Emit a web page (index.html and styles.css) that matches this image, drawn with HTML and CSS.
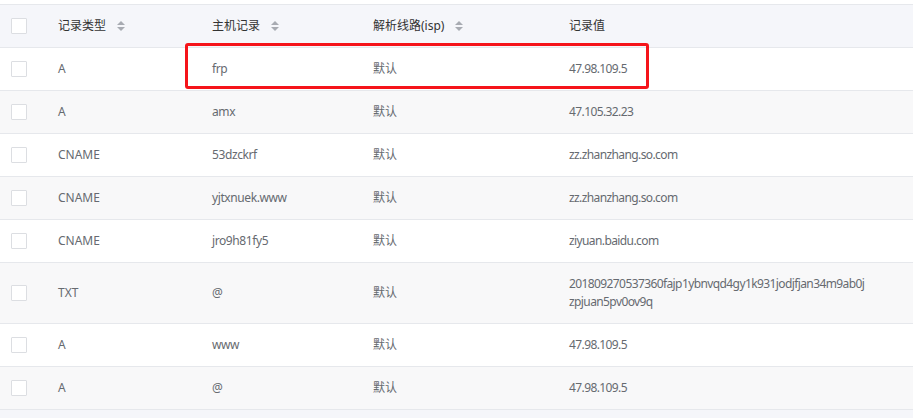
FILE: index.html
```html
<!DOCTYPE html>
<html lang="zh-CN">
<head>
<meta charset="utf-8">
<title>解析记录</title>
<link rel="stylesheet" href="styles.css">
</head>
<body>
<div class="page">
  <div class="table">
    <div class="row head">
      <div class="cell check"><span class="box"></span></div>
      <div class="cell">记录类型<span class="sort"><i class="up"></i><i class="down"></i></span></div>
      <div class="cell">主机记录<span class="sort"><i class="up"></i><i class="down"></i></span></div>
      <div class="cell">解析线路(isp)<span class="sort"><i class="up"></i><i class="down"></i></span></div>
      <div class="cell">记录值</div>
    </div>
    <div class="row">
      <div class="cell check"><span class="box"></span></div>
      <div class="cell">A</div><div class="cell host">frp</div><div class="cell">默认</div><div class="cell value">47.98.109.5</div>
    </div>
    <div class="row alt">
      <div class="cell check"><span class="box"></span></div>
      <div class="cell">A</div><div class="cell host">amx</div><div class="cell">默认</div><div class="cell value">47.105.32.23</div>
    </div>
    <div class="row">
      <div class="cell check"><span class="box"></span></div>
      <div class="cell">CNAME</div><div class="cell host">53dzckrf</div><div class="cell">默认</div><div class="cell value">zz.zhanzhang.so.com</div>
    </div>
    <div class="row alt">
      <div class="cell check"><span class="box"></span></div>
      <div class="cell">CNAME</div><div class="cell host">yjtxnuek.www</div><div class="cell">默认</div><div class="cell value">zz.zhanzhang.so.com</div>
    </div>
    <div class="row">
      <div class="cell check"><span class="box"></span></div>
      <div class="cell">CNAME</div><div class="cell host">jro9h81fy5</div><div class="cell">默认</div><div class="cell value">ziyuan.baidu.com</div>
    </div>
    <div class="row alt tall">
      <div class="cell check"><span class="box"></span></div>
      <div class="cell">TXT</div><div class="cell host">@</div><div class="cell">默认</div><div class="cell value long">201809270537360fajp1ybnvqd4gy1k931jodjfjan34m9ab0j<br>zpjuan5pv0ov9q</div>
    </div>
    <div class="row">
      <div class="cell check"><span class="box"></span></div>
      <div class="cell">A</div><div class="cell host">www</div><div class="cell">默认</div><div class="cell value">47.98.109.5</div>
    </div>
    <div class="row alt">
      <div class="cell check"><span class="box"></span></div>
      <div class="cell">A</div><div class="cell host">@</div><div class="cell">默认</div><div class="cell value">47.98.109.5</div>
    </div>
  </div>
  <div class="highlight"></div>
</div>
</body>
</html>
```

FILE: styles.css
```css
html, body {
  margin: 0;
  padding: 0;
  background: #f5f6fa;
}
body {
  font-family: "Noto Sans", "Noto Sans CJK SC", sans-serif;
  font-size: 12px;
  color: #666a70;
}
.page {
  position: relative;
  padding-top: 4px;
  background: #fff;
}
.table {
  border-top: 1px solid #e6e8ec;
}
.row {
  display: grid;
  grid-template-columns: 58px 154px 161px 196px 1fr;
  height: 42px;
  border-bottom: 1px solid #e6e8ec;
  background: #fff;
}
.row.alt {
  background: #f8f8f9;
}
.row.tall {
  height: 60px;
}
.row.head {
  background: #f5f6fa;
  color: #333;
}
.cell {
  display: flex;
  align-items: center;
  line-height: 18px;
}
.host {
  letter-spacing: -0.4px;
}
.value {
  letter-spacing: -0.6px;
}
.value.long {
  display: block;
  align-self: center;
}
.check {
  padding-left: 11px;
}
.box {
  width: 14px;
  height: 14px;
  border: 1px solid #dcdee2;
  border-radius: 1px;
  background: #fff;
}
.sort {
  display: inline-flex;
  flex-direction: column;
  gap: 2px;
  margin-left: 11px;
}
.sort i {
  display: block;
  width: 0;
  height: 0;
  border-left: 4px solid transparent;
  border-right: 4px solid transparent;
}
.sort .up {
  border-bottom: 4px solid #a8abb2;
}
.sort .down {
  border-top: 4px solid #a8abb2;
}
.highlight {
  position: absolute;
  left: 185px;
  top: 43px;
  width: 458px;
  height: 40px;
  border: 3px solid #f5141a;
  border-radius: 3px;
}
```
